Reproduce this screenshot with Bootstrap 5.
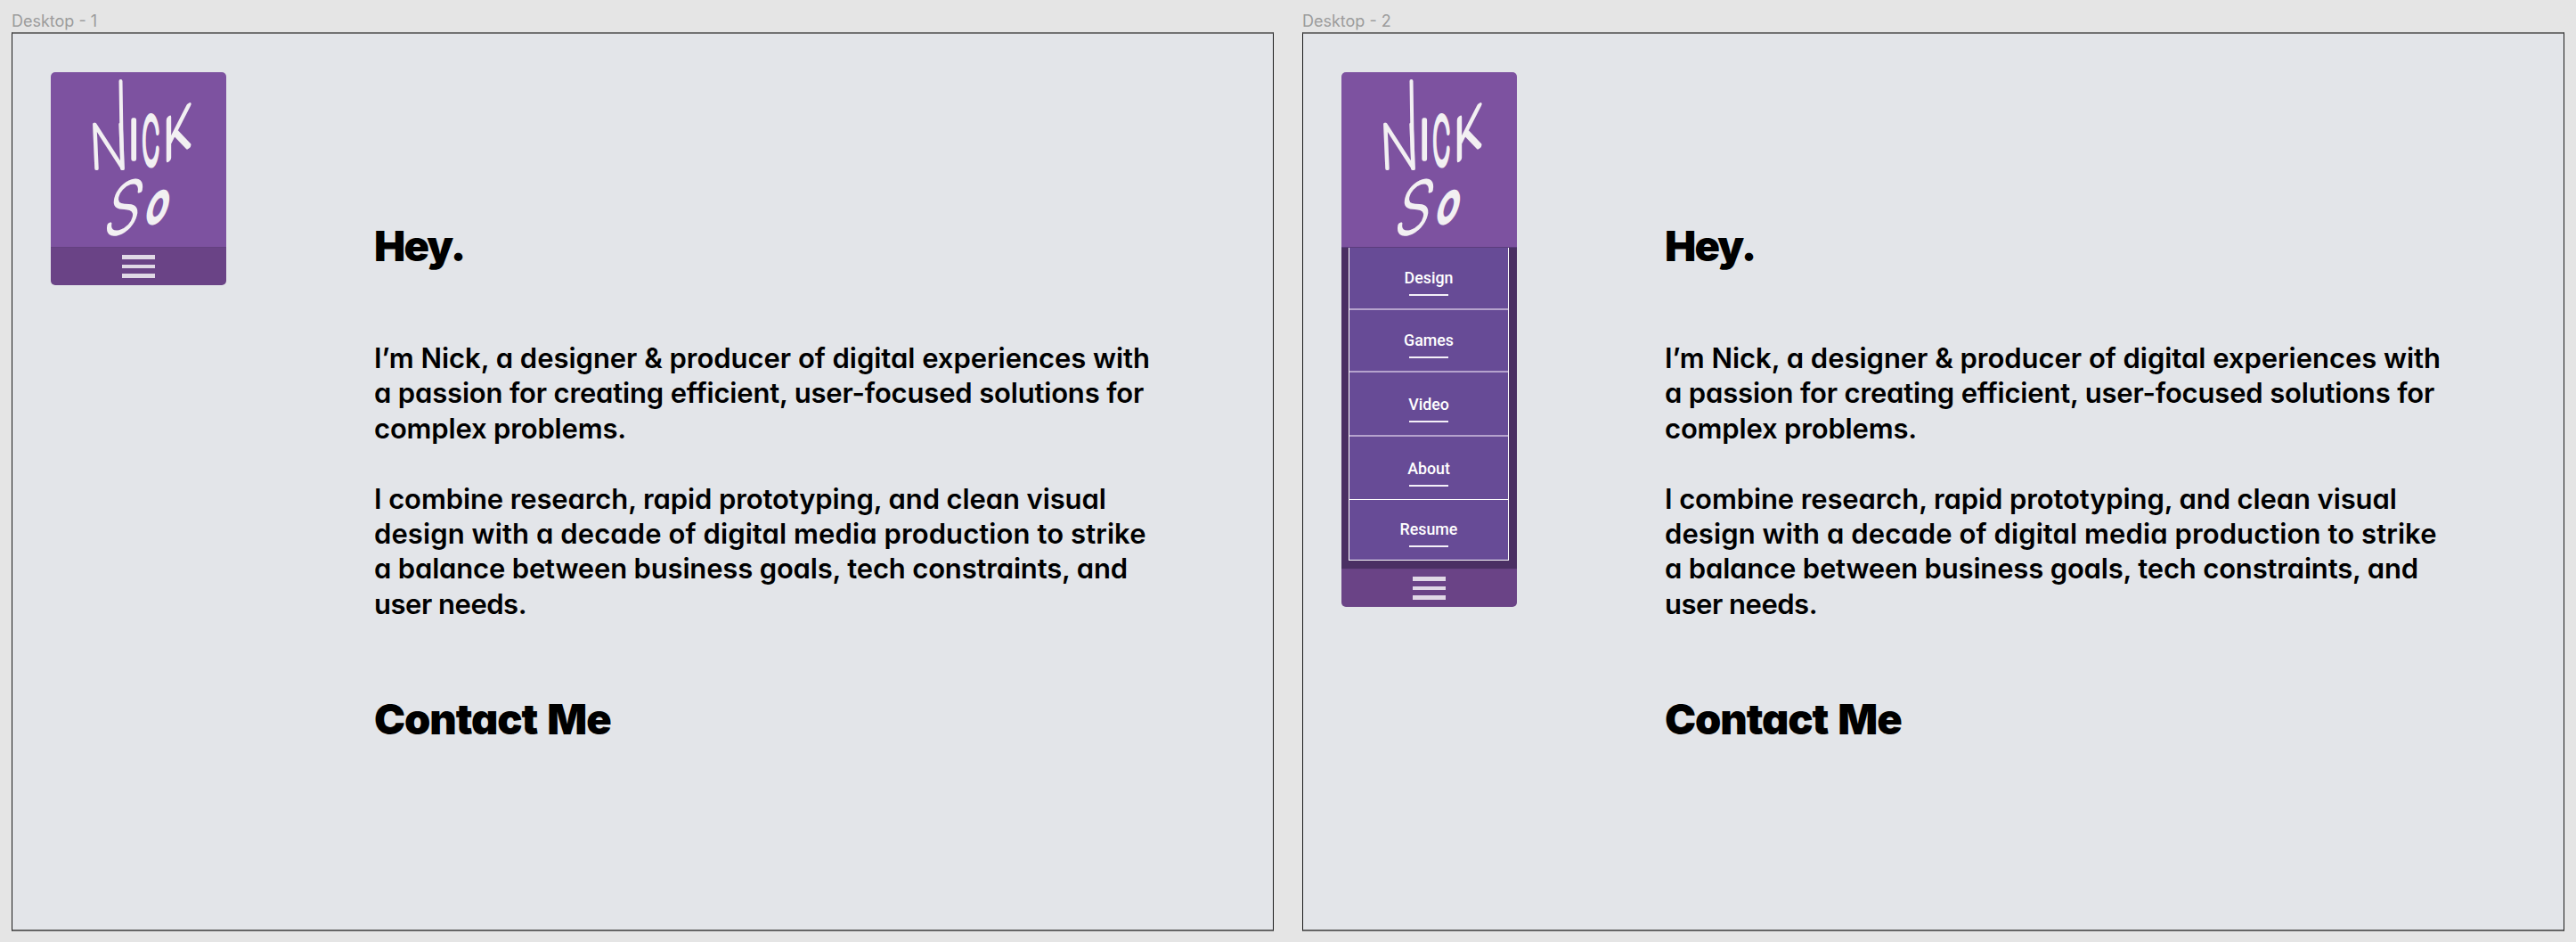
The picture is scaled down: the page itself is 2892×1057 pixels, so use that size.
<!DOCTYPE html>
<html lang="en">
<head>
<meta charset="utf-8">
<title>Nick So</title>
<link href="https://cdn.jsdelivr.net/npm/bootstrap@5.3.0/dist/css/bootstrap.min.css" rel="stylesheet">
<style>
body{background:#e5e5e5;width:2892px;height:1057px;overflow:hidden;font-family:Inter,"Open Sans",sans-serif;color:#000}
.boards{padding:10px 0 0 13px;gap:32px}
.board{width:1417px}
.board-label{height:26px;line-height:28px;font-size:18px;color:#9c9c9c;white-space:nowrap}
.canvas{height:1009px;background:#e3e5e9;border:1px solid #1c1c1c;border-top:2px solid #727272;border-bottom:2px solid #666;padding:43px 0 0 43px}
.brand{width:197px}
.tile{width:197px;height:196px;background:#7d52a0;display:block;border-radius:5px 5px 0 0;overflow:visible}
.tile text{font-family:Inter,sans-serif;font-weight:100;font-size:100px;fill:#f2f0f2;stroke:#f2f0f2;stroke-linejoin:round}
.tile *{vector-effect:non-scaling-stroke}
.bar{height:43px;background:#6a4386;border-top:1px solid #63407f;border-radius:0 0 5px 5px;gap:6px}
.bar i{width:37px;height:4.4px;background:#e0d8e6}
.drawer{background:#4a2f63;padding:0 9px 9px 8px;height:361px;border-top:1px solid #5b3c7d}
.panel{background:#674b96;border:1px solid #fff;border-top:0}
.entry{font:500 17.8px/22px Roboto,sans-serif;color:#fff;height:71px;padding-top:24px;border-bottom:2px solid #b5a2cd}
.entry:first-child{height:70px;padding-top:23px}
.entry:last-child{height:67px;padding-top:22px;border:0}
.entry i{width:44px;height:2px;background:#f4f0f8;margin-top:7px}
.entry.games{height:70px;padding-top:23px}
.entry.video{height:72px;padding-top:25px}
.entry.about{padding-top:25px;border-bottom:1px solid #fff}
.copy{padding:165px 0 0 166px;white-space:nowrap}
.copy h1{font-size:47px;line-height:60px;font-weight:900;margin:0;font-feature-settings:"cv11";letter-spacing:-1.1px;word-spacing:3px}
.copy h1:first-child{letter-spacing:-1.8px}
.copy p{font-size:31px;line-height:39.4px;font-weight:600;margin:0 0 39.4px;font-feature-settings:"cv11"}
.copy p:first-of-type{margin-top:76px}
.copy .again{margin-top:79.7px}
.t0{letter-spacing:-.03px}
.t1{letter-spacing:-.11px}
.t2{letter-spacing:-.17px}
.t3{letter-spacing:-.48px}
.w1{letter-spacing:.09px}
</style>
</head>
<body>
<main class="boards d-flex">
<section class="board">
<div class="board-label">Desktop - 1</div>
<div class="canvas d-flex align-items-start">
<div class="brand">
<svg class="tile" viewBox="0 0 197 196">
<g id="mark-art">
<text transform="matrix(.56 0 .03 .68 44.5 108)" stroke-width="3.5">N</text>
<line x1="78.500" y1="10" x2="80" y2="108" stroke="#f2f0f2" stroke-width="4" stroke-linecap="round"/>
<text transform="matrix(.5 0 0 .59 87 97)" stroke-width="5">I</text>
<text transform="matrix(.27 0 0 .72 102.500 103)" stroke-width="6">C</text>
<text transform="matrix(.52 -.34 0 .63 126 102)" stroke-width="5">K</text>
<text transform="matrix(.65 -.2 -.18 .78 57 186)" stroke-width="4">S</text>
<text transform="matrix(.38 -.04 -.16 .56 105 168)" stroke-width="7">o</text>
</g></svg>
<div class="bar d-flex flex-column align-items-center justify-content-center"><i></i><i></i><i></i></div>
</div>
<div class="copy">
<h1>Hey.</h1>
<p><span class="t0">I’m Nick, a designer &amp; producer of digital experiences with</span><br><span class="t2">a passion for creating efficient, user-focused solutions for</span><br><span class="t2">complex problems.</span></p>
<p><span class="t1">I combine research, rapid prototyping, and clean visual</span><br><span class="w1">design with a decade of digital media production to strike</span><br><span class="t2">a balance between business goals, tech constraints, and</span><br><span class="t3">user needs.</span></p>
<h1 class="again">Contact Me</h1>
</div>
</div>
</section>
<section class="board">
<div class="board-label">Desktop - 2</div>
<div class="canvas d-flex align-items-start">
<div class="brand">
<svg class="tile" viewBox="0 0 197 196"><use href="#mark-art"/></svg>
<nav class="drawer"><div class="panel">
<div class="entry d-flex flex-column align-items-center">Design<i></i></div>
<div class="entry games d-flex flex-column align-items-center">Games<i></i></div>
<div class="entry video d-flex flex-column align-items-center">Video<i></i></div>
<div class="entry about d-flex flex-column align-items-center">About<i></i></div>
<div class="entry d-flex flex-column align-items-center">Resume<i></i></div>
</div></nav>
<div class="bar d-flex flex-column align-items-center justify-content-center"><i></i><i></i><i></i></div>
</div>
<div class="copy">
<h1>Hey.</h1>
<p><span class="t0">I’m Nick, a designer &amp; producer of digital experiences with</span><br><span class="t2">a passion for creating efficient, user-focused solutions for</span><br><span class="t2">complex problems.</span></p>
<p><span class="t1">I combine research, rapid prototyping, and clean visual</span><br><span class="w1">design with a decade of digital media production to strike</span><br><span class="t2">a balance between business goals, tech constraints, and</span><br><span class="t3">user needs.</span></p>
<h1 class="again">Contact Me</h1>
</div>
</div>
</section>
</main>
<script src="https://cdn.jsdelivr.net/npm/bootstrap@5.3.0/dist/js/bootstrap.bundle.min.js"></script>
</body>
</html>
